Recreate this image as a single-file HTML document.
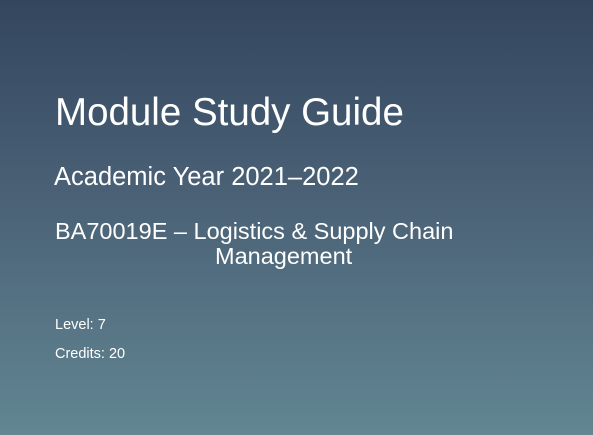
<!DOCTYPE html>
<html><head><style>
html,body{margin:0;padding:0}
body{width:593px;height:435px;overflow:hidden;position:relative;background:linear-gradient(to bottom,#33465e 0%,#4a6176 45%,#628692 100%);font-family:"Liberation Sans",Arial,sans-serif;color:#fff}
div{position:absolute;white-space:nowrap;line-height:1}
</style></head><body>
<div style="left:55px;top:94px;font-size:38.5px">Module Study Guide</div>
<div style="left:54px;top:165px;font-size:25.5px">Academic Year 2021–2022</div>
<div style="left:55px;top:220px;font-size:23.5px">BA70019E – Logistics &amp; Supply Chain</div>
<div style="left:215px;top:245px;font-size:23.5px">Management</div>
<div style="left:55px;top:318px;font-size:14.5px">Level: 7</div>
<div style="left:55px;top:347px;font-size:14.5px">Credits: 20</div>
</body></html>
